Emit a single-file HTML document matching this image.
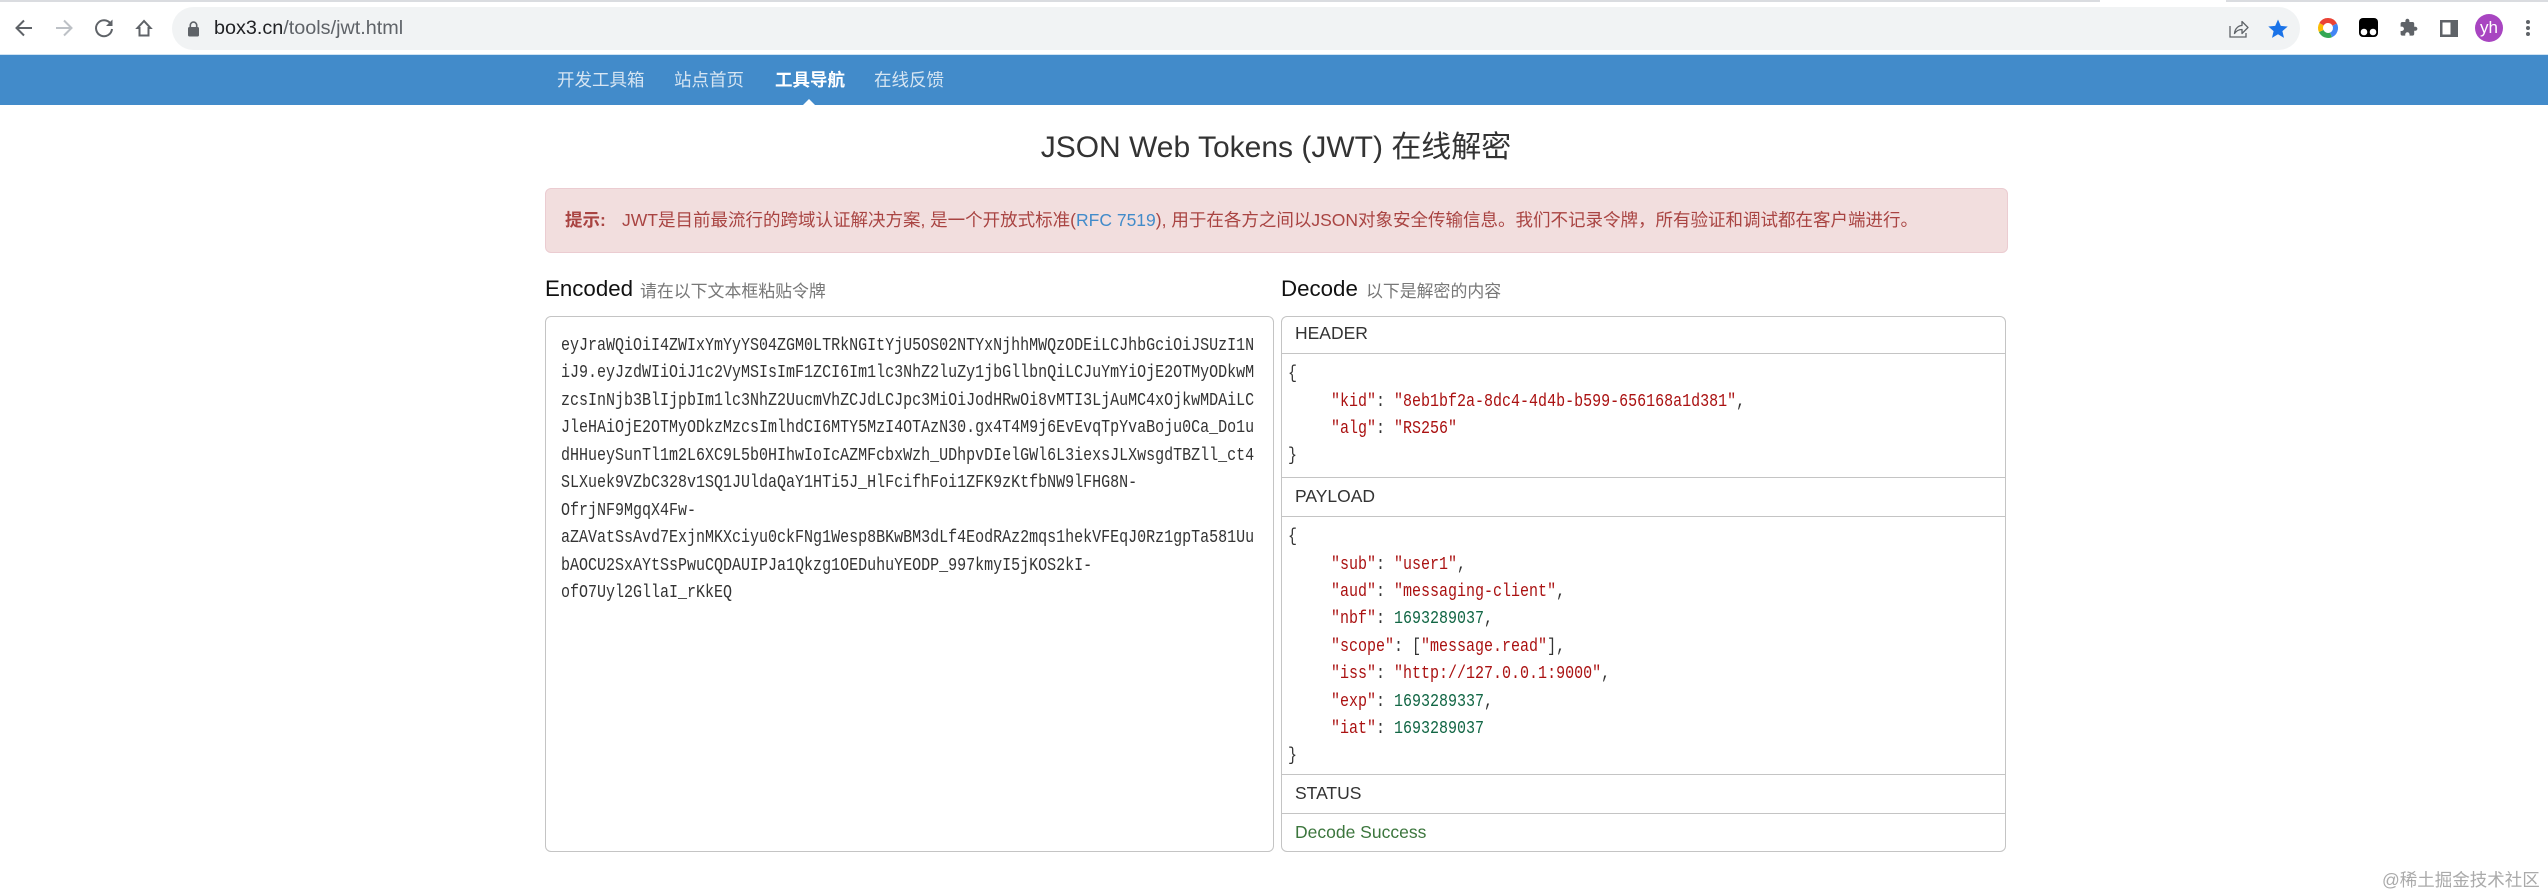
<!DOCTYPE html>
<html lang="zh">
<head>
<meta charset="utf-8">
<title>JWT</title>
<style>
html,body{margin:0;padding:0;background:#fff;}
body{position:relative;width:2548px;height:895px;overflow:hidden;font-family:"Liberation Sans","Noto Sans CJK SC",sans-serif;color:#333;}
.a{position:absolute;white-space:pre;}
.box{position:absolute;box-sizing:border-box;}
.mid{line-height:30px;height:30px;}
.code{position:absolute;margin-top:1px;white-space:pre;font-family:"Liberation Mono","Noto Sans CJK SC",monospace;font-size:18px;line-height:28px;height:28px;transform:scaleX(.8334);transform-origin:0 50%;color:#333;}
.s{color:#a11;}.n{color:#164;}
.line{position:absolute;background:#c4c4c4;height:1px;left:1281px;width:725px;}
.sec{position:absolute;left:1295px;font-size:17.5px;line-height:30px;height:30px;color:#333;white-space:pre;}
</style>
</head>
<body>
<!-- browser chrome -->
<div class="box" style="left:0;top:0;width:2548px;height:2px;background:#dadce0;"></div>
<div class="box" style="left:2100px;top:0;width:126px;height:2px;background:#fff;"></div>
<div class="box" style="left:172px;top:7px;width:2128px;height:43px;background:#f1f3f4;border-radius:22px;"></div>
<div class="box" style="left:0;top:54px;width:2548px;height:1px;background:#cfe3f3;"></div>

<svg class="a" style="left:0;top:0;" width="2548" height="55" viewBox="0 0 2548 55">
  <!-- back -->
  <path d="M32 28H17M24 20.5L16.5 28L24 35.5" fill="none" stroke="#5f6368" stroke-width="2"/>
  <!-- forward -->
  <path d="M56 28H71M64 20.5L71.5 28L64 35.5" fill="none" stroke="#bdc1c6" stroke-width="2"/>
  <!-- reload -->
  <path d="M110.5 23.5A8 8 0 1 0 112 29" fill="none" stroke="#5f6368" stroke-width="2"/>
  <path d="M112.5 19.5V26H106Z" fill="#5f6368"/>
  <!-- home -->
  <path d="M144 21L137.500 28H139.500V35.500H148.500V28H150.500Z" fill="none" stroke="#5f6368" stroke-width="2" stroke-linejoin="miter"/>
  <!-- lock -->
  <rect x="188" y="27" width="11" height="9.500" rx="1.500" fill="#5f6368"/>
  <path d="M190.300 27V25.300A3.200 3.200 0 0 1 196.700 25.300V27" fill="none" stroke="#5f6368" stroke-width="1.600"/>
  <!-- share -->
  <g transform="translate(2000,0)">
    <path d="M230 26V37H246V33" fill="none" stroke="#5f6368" stroke-width="1.300"/>
    <path d="M234.500 33.500C235 28 239 25.500 242 25.500V21.500L248 27.500L242 33.500V29.500C239.500 29.500 236.500 30.500 234.500 33.500Z" fill="none" stroke="#5f6368" stroke-width="1.300" stroke-linejoin="round"/>
  </g>
  <!-- star -->
  <path d="M2278 19.500L2280.800 25.900L2287.700 26.500L2282.400 31.100L2284 37.900L2278 34.300L2272 37.900L2273.600 31.100L2268.300 26.500L2275.200 25.900Z" fill="#1a73e8"/>
  <!-- ring -->
  <g fill="none" stroke-width="5">
    <path d="M2321.500 24.200A7.500 7.500 0 0 1 2334.700 24.600" stroke="#ea4335"/>
    <path d="M2334.700 24.600A7.500 7.500 0 0 1 2331 34.900" stroke="#4285f4"/>
    <path d="M2331 34.900A7.500 7.500 0 0 1 2321.200 31" stroke="#34a853"/>
    <path d="M2321.200 31A7.500 7.500 0 0 1 2321.500 24.200" stroke="#fbbc05"/>
  </g>
  <!-- tampermonkey -->
  <rect x="2359" y="18" width="19" height="19" rx="4" fill="#000"/>
  <circle cx="2364" cy="32" r="3.300" fill="#fff"/>
  <circle cx="2373" cy="32" r="3.300" fill="#fff"/>
  <!-- puzzle -->
  <path transform="translate(2399,18) scale(.8)" d="M20.500 11H19V7c0-1.100-.9-2-2-2h-4V3.500C13 2.120 11.880 1 10.500 1S8 2.120 8 3.500V5H4c-1.100 0-1.990.9-1.990 2v3.800H3.500c1.490 0 2.700 1.210 2.700 2.700s-1.210 2.700-2.700 2.700H2V20c0 1.100.9 2 2 2h3.800v-1.500c0-1.490 1.210-2.700 2.700-2.700 1.490 0 2.700 1.210 2.700 2.700V22H17c1.100 0 2-.9 2-2v-4h1.500c1.380 0 2.500-1.120 2.500-2.500S21.880 11 20.500 11z" fill="#5f6368"/>
  <!-- side panel -->
  <rect x="2440" y="20" width="18" height="17" fill="#5f6368"/>
  <rect x="2442.500" y="22.500" width="8" height="12" fill="#fff"/>
  <!-- avatar -->
  <circle cx="2489" cy="28" r="14" fill="#a845c1"/>
  <!-- menu -->
  <circle cx="2528" cy="22" r="2" fill="#5f6368"/>
  <circle cx="2528" cy="28" r="2" fill="#5f6368"/>
  <circle cx="2528" cy="34" r="2" fill="#5f6368"/>
</svg>
<div class="a" style="left:2475px;top:14px;width:28px;text-align:center;color:#fff;font-size:17px;line-height:28px;">yh</div>
<div class="a" style="left:214px;top:14px;font-size:19.800px;line-height:28px;color:#5f6368;"><span style="color:#202124">box3.cn</span>/tools/jwt.html</div>

<!-- nav -->
<div class="box" style="left:0;top:55px;width:2548px;height:50px;background:#428bca;"></div>
<div class="a mid" style="left:557px;top:65px;font-size:17.500px;color:#d6e5f2;">开发工具箱</div>
<div class="a mid" style="left:674px;top:65px;font-size:17.500px;color:#d6e5f2;">站点首页</div>
<div class="a mid" style="left:775px;top:65px;font-size:17.500px;color:#fff;font-weight:bold;">工具导航</div>
<div class="a mid" style="left:874px;top:65px;font-size:17.500px;color:#d6e5f2;">在线反馈</div>
<div class="box" style="left:803px;top:99px;width:0;height:0;border-left:6px solid transparent;border-right:6px solid transparent;border-bottom:6px solid #fff;"></div>

<!-- title -->
<div class="a" style="left:776px;top:128px;width:1000px;text-align:center;font-size:30px;line-height:40px;color:#333;">JSON Web Tokens (JWT) 在线解密</div>

<!-- alert -->
<div class="box" style="left:545px;top:188px;width:1463px;height:65px;background:#f2dede;border:1px solid #ebccd1;border-radius:6px;"></div>
<div class="a mid" style="left:565px;top:205px;font-size:17.500px;color:#a94442;font-weight:bold;">提示:</div>
<div class="a mid" style="left:622px;top:205px;font-size:17.500px;color:#a94442;">JWT是目前最流行的跨域认证解决方案, 是一个开放式标准(<span style="color:#428bca">RFC 7519</span>), 用于在各方之间以JSON对象安全传输信息。我们不记录令牌，所有验证和调试都在客户端进行。</div>

<!-- labels -->
<div class="a mid" style="left:545px;top:274px;font-size:22.300px;color:#111;">Encoded</div>
<div class="a mid" style="left:640px;top:277px;font-size:16.900px;color:#777;">请在以下文本框粘贴令牌</div>
<div class="a mid" style="left:1281px;top:274px;font-size:22.300px;color:#111;">Decode</div>
<div class="a mid" style="left:1366px;top:277px;font-size:16.900px;color:#777;">以下是解密的内容</div>

<!-- encoded panel -->
<div class="box" style="left:545px;top:316px;width:729px;height:536px;border:1px solid #c4c4c4;border-radius:6px;"></div>
<div class="code" style="left:561px;top:331px;">eyJraWQiOiI4ZWIxYmYyYS04ZGM0LTRkNGItYjU5OS02NTYxNjhhMWQzODEiLCJhbGciOiJSUzI1N</div>
<div class="code" style="left:561px;top:358px;">iJ9.eyJzdWIiOiJ1c2VyMSIsImF1ZCI6Im1lc3NhZ2luZy1jbGllbnQiLCJuYmYiOjE2OTMyODkwM</div>
<div class="code" style="left:561px;top:386px;">zcsInNjb3BlIjpbIm1lc3NhZ2UucmVhZCJdLCJpc3MiOiJodHRwOi8vMTI3LjAuMC4xOjkwMDAiLC</div>
<div class="code" style="left:561px;top:413px;">JleHAiOjE2OTMyODkzMzcsImlhdCI6MTY5MzI4OTAzN30.gx4T4M9j6EvEvqTpYvaBoju0Ca_Do1u</div>
<div class="code" style="left:561px;top:441px;">dHHueySunTl1m2L6XC9L5b0HIhwIoIcAZMFcbxWzh_UDhpvDIelGWl6L3iexsJLXwsgdTBZll_ct4</div>
<div class="code" style="left:561px;top:468px;">SLXuek9VZbC328v1SQ1JUldaQaY1HTi5J_HlFcifhFoi1ZFK9zKtfbNW9lFHG8N-</div>
<div class="code" style="left:561px;top:496px;">OfrjNF9MgqX4Fw-</div>
<div class="code" style="left:561px;top:523px;">aZAVatSsAvd7ExjnMKXciyu0ckFNg1Wesp8BKwBM3dLf4EodRAz2mqs1hekVFEqJ0Rz1gpTa581Uu</div>
<div class="code" style="left:561px;top:551px;">bAOCU2SxAYtSsPwuCQDAUIPJa1Qkzg1OEDuhuYEODP_997kmyI5jKOS2kI-</div>
<div class="code" style="left:561px;top:578px;">ofO7Uyl2GllaI_rKkEQ</div>

<!-- decode panel -->
<div class="box" style="left:1281px;top:316px;width:725px;height:536px;border:1px solid #c4c4c4;border-radius:6px;"></div>
<div class="line" style="top:353px;"></div>
<div class="line" style="top:477px;"></div>
<div class="line" style="top:516px;"></div>
<div class="line" style="top:774px;"></div>
<div class="line" style="top:813px;"></div>

<div class="sec" style="top:318px;">HEADER</div>
<div class="code" style="left:1288px;top:359px;">{</div>
<div class="code" style="left:1331px;top:387px;"><span class="s">"kid"</span>: <span class="s">"8eb1bf2a-8dc4-4d4b-b599-656168a1d381"</span>,</div>
<div class="code" style="left:1331px;top:414px;"><span class="s">"alg"</span>: <span class="s">"RS256"</span></div>
<div class="code" style="left:1288px;top:441px;">}</div>

<div class="sec" style="top:481px;">PAYLOAD</div>
<div class="code" style="left:1288px;top:522px;">{</div>
<div class="code" style="left:1331px;top:550px;"><span class="s">"sub"</span>: <span class="s">"user1"</span>,</div>
<div class="code" style="left:1331px;top:577px;"><span class="s">"aud"</span>: <span class="s">"messaging-client"</span>,</div>
<div class="code" style="left:1331px;top:604px;"><span class="s">"nbf"</span>: <span class="n">1693289037</span>,</div>
<div class="code" style="left:1331px;top:632px;"><span class="s">"scope"</span>: [<span class="s">"message.read"</span>],</div>
<div class="code" style="left:1331px;top:659px;"><span class="s">"iss"</span>: <span class="s">"http://127.0.0.1:9000"</span>,</div>
<div class="code" style="left:1331px;top:687px;"><span class="s">"exp"</span>: <span class="n">1693289337</span>,</div>
<div class="code" style="left:1331px;top:714px;"><span class="s">"iat"</span>: <span class="n">1693289037</span></div>
<div class="code" style="left:1288px;top:741px;">}</div>

<div class="sec" style="top:778px;">STATUS</div>
<div class="sec" style="top:817px;color:#3c763d;">Decode Success</div>

<!-- watermark -->
<div class="a" style="left:2382px;top:868px;font-size:17.500px;line-height:24px;color:#aaa;">@稀土掘金技术社区</div>
</body>
</html>
